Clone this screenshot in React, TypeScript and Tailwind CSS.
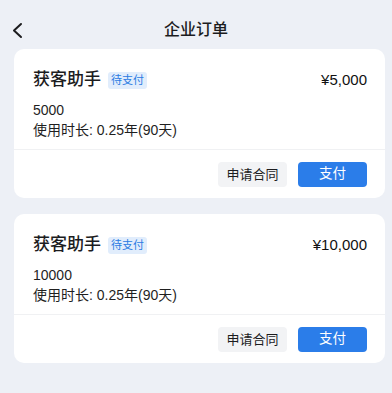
import React from "react";

interface Order {
  name: string;
  status: string;
  price: string;
  quota: string;
  duration: string;
}

const orders: Order[] = [
  { name: "获客助手", status: "待支付", price: "¥5,000", quota: "5000", duration: "使用时长: 0.25年(90天)" },
  { name: "获客助手", status: "待支付", price: "¥10,000", quota: "10000", duration: "使用时长: 0.25年(90天)" },
];

const font = {
  fontFamily: '"Liberation Sans", "Noto Sans CJK SC", sans-serif',
};

const OrderCard: React.FC<{ order: Order }> = ({ order }) => (
  <div className="ml-[14px] mr-[7px] rounded-[10px] bg-white">
    <div className="pl-[19px] pr-[18px] pt-[21px] pb-[9px]">
      {/* Title row */}
      <div className="flex h-[20px] items-center justify-between">
        <div className="flex items-center">
          <span className="text-[17px] font-medium leading-[20px] text-[#1c1c1e]">{order.name}</span>
          <span className="ml-[7px] flex h-[17px] items-center rounded-[3px] bg-[#e1edfc] px-[3px] text-[11px] leading-none text-[#2b7be2]">
            {order.status}
          </span>
        </div>
        <span className="text-[15px] font-medium leading-[20px] text-[#111]">{order.price}</span>
      </div>
      <div className="mt-[10px] text-[14px] leading-[20px] text-[#1f1f1f]">
        <div>{order.quota}</div>
        <div>{order.duration}</div>
      </div>
    </div>
    <div className="h-px bg-[#f0f1f3]" />
    <div className="flex justify-end gap-[11px] pl-[19px] pr-[18px] pt-[12px] pb-[11px]">
      <button className="h-[25px] w-[69px] rounded-[4px] bg-[#f2f3f5] text-[13px] text-[#1c1c1e]">
        申请合同
      </button>
      <button className="h-[25px] w-[69px] rounded-[4px] bg-[#2b7de9] text-[13.5px] text-white">
        支付
      </button>
    </div>
  </div>
);

export default function App() {
  return (
    <div className="min-h-[393px] w-[392px] bg-[#edf0f6] pt-[18px]" style={font}>
      {/* Header */}
      <div className="relative flex h-[24px] items-center justify-center">
        <svg className="absolute left-[12px] top-[4px]" width="14" height="17" viewBox="0 0 14 17" fill="none">
          <polyline points="9,2 2,8.5 9,15" stroke="#1c1c1e" strokeWidth="2" strokeLinecap="round" strokeLinejoin="round" />
        </svg>
        <span className="text-[16px] font-medium text-[#1c1c1e]">企业订单</span>
      </div>

      <div className="mt-[7px] flex flex-col gap-[16px]">
        {orders.map((order, i) => (
          <OrderCard key={i} order={order} />
        ))}
      </div>
    </div>
  );
}
